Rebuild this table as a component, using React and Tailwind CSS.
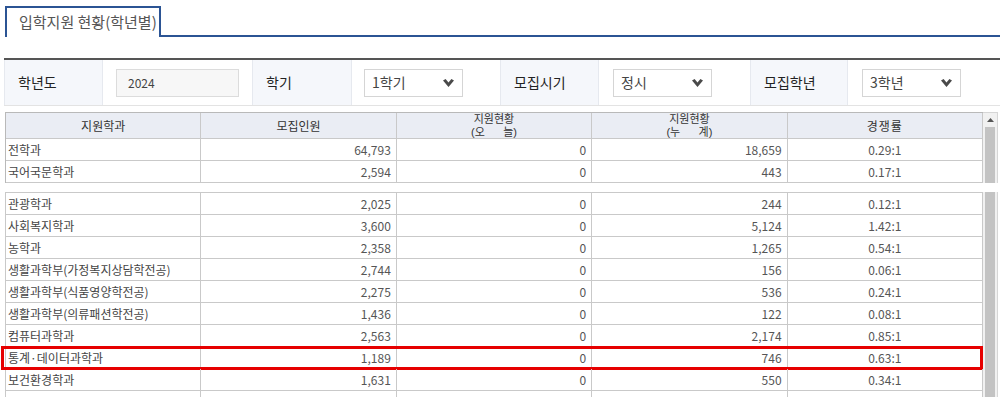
import React from 'react';

const topRows = [
  ['전학과', '64,793', '0', '18,659', '0.29:1'],
  ['국어국문학과', '2,594', '0', '443', '0.17:1'],
];

const bottomRows = [
  ['관광학과', '2,025', '0', '244', '0.12:1'],
  ['사회복지학과', '3,600', '0', '5,124', '1.42:1'],
  ['농학과', '2,358', '0', '1,265', '0.54:1'],
  ['생활과학부(가정복지상담학전공)', '2,744', '0', '156', '0.06:1'],
  ['생활과학부(식품영양학전공)', '2,275', '0', '536', '0.24:1'],
  ['생활과학부(의류패션학전공)', '1,436', '0', '122', '0.08:1'],
  ['컴퓨터과학과', '2,563', '0', '2,174', '0.85:1'],
  ['통계·데이터과학과', '1,189', '0', '746', '0.63:1', true],
  ['보건환경학과', '1,631', '0', '550', '0.34:1'],
  ['', '', '', '', ''],
];

function Chevron() {
  return (
    <svg width="11" height="8" viewBox="0 0 11 8" className="shrink-0">
      <path d="M0 1.6 L2.6 0 L5.5 3.6 L8.4 0 L11 1.6 L5.5 8 Z" fill="#4a4a4a" />
    </svg>
  );
}

function Select({ value, offset }) {
  return (
    <div className={`h-full flex items-center ${offset}`}>
      <div className="w-[99px] h-[28px] border border-[#d5d5d5] bg-white flex items-center justify-between pl-[7px] pr-[8px] text-[14px] text-[#444]">
        <span>{value}</span>
        <Chevron />
      </div>
    </div>
  );
}

function Label({ children }) {
  return (
    <div className="h-full bg-[#f5f7fb] border-x border-[#e6e9ef] flex items-center pl-[13px] text-[14px] text-[#222]">
      {children}
    </div>
  );
}

function Row({ r }) {
  return (
    <div className="relative grid grid-cols-5 h-[22px] border-b border-[#c9c9c9] text-[12px] text-[#555]">
      <div className="border-r border-[#c9c9c9] flex items-center pl-[2px] text-[#444] whitespace-nowrap overflow-hidden">{r[0]}</div>
      <div className="border-r border-[#c9c9c9] flex items-center justify-end pr-[5px]">{r[1]}</div>
      <div className="border-r border-[#c9c9c9] flex items-center justify-end pr-[5px]">{r[2]}</div>
      <div className="border-r border-[#c9c9c9] flex items-center justify-end pr-[5px]">{r[3]}</div>
      <div className="border-r border-[#c9c9c9] flex items-center justify-center">{r[4]}</div>
      {r[5] && (
        <div className="pointer-events-none absolute -left-[5px] right-0 -top-[1px] h-[24px] border-[3px] border-[#e60000]" />
      )}
    </div>
  );
}

function TwoLine({ a, b }) {
  return (
    <div className="border-r border-[#c9c9c9] flex flex-col items-center justify-center whitespace-pre font-['Liberation_Sans','Noto_Sans_CJK_KR',sans-serif] text-[11px] leading-[13px]">
      <span>{a}</span>
      <span>{b}</span>
    </div>
  );
}

export default function App() {
  return (
    <div className="w-[1004px] h-[397px] overflow-hidden bg-white font-['Noto_Sans_CJK_KR','Noto_Sans',sans-serif]">
      {/* Tab */}
      <div className="pt-[6px] flex items-end pr-[4px]">
        <div className="ml-[5px] w-[156px] h-[31px] border-2 border-b-0 border-[#2b5494] flex items-center pl-[12px] text-[15px] text-[#555]">
          입학지원 현황(학년별)
        </div>
        <div className="flex-1 border-b-2 border-[#2b5494]" />
      </div>

      {/* Filter bar */}
      <div className="mt-[21px] mx-[4px] border-t-2 border-[#555] border-b border-b-[#e3e3e3] h-[48px] grid grid-cols-[99px_149px_100px_148px_99px_151px_98px_150px]">
        <Label>학년도</Label>
        <div className="h-full flex items-center pl-[13px]">
          <div className="w-[123px] h-[28px] border border-[#dcdcdc] bg-[#f7f7f7] flex items-center pl-[11px] text-[12px] text-[#444]">
            2024
          </div>
        </div>
        <Label>학기</Label>
        <Select value="1학기" offset="pl-[12px]" />
        <Label>모집시기</Label>
        <Select value="정시" offset="pl-[14px]" />
        <Label>모집학년</Label>
        <Select value="3학년" offset="pl-[14px]" />
      </div>

      {/* Table, upper part */}
      <div className="mt-[6px] ml-[5px] w-[993px] flex">
        <div className="w-[978px] border-l border-t border-[#b9b9b9]">
          <div className="grid grid-cols-5 h-[26px] bg-[#eaedf4] border-b border-[#c9c9c9] text-[12px] text-[#333]">
            <div className="border-r border-[#c9c9c9] flex items-center justify-center">지원학과</div>
            <div className="border-r border-[#c9c9c9] flex items-center justify-center">모집인원</div>
            <TwoLine a="지원현황" b="(오      늘)" />
            <TwoLine a="지원현황" b="(누      계)" />
            <div className="border-r border-[#c9c9c9] flex items-center justify-center tracking-[1px]">경쟁률</div>
          </div>
          {topRows.map((r, i) => (
            <Row key={i} r={r} />
          ))}
        </div>
        <div className="w-[15px] flex flex-col border-t border-r border-[#d6d6d6] bg-[#f1f1f1]">
          <div className="h-[14px] flex items-center justify-center">
            <svg width="7" height="4" viewBox="0 0 7 4">
              <path d="M0 4 L3.5 0 L7 4 Z" fill="#555" />
            </svg>
          </div>
          <div className="flex-1 mx-[2px] bg-[#c3c3c3]" />
        </div>
      </div>

      {/* gap */}
      <div className="h-[9px]" />

      {/* Table, lower part */}
      <div className="ml-[5px] w-[993px] flex">
        <div className="w-[978px] border-l border-t border-[#c9c9c9]">
          {bottomRows.map((r, i) => (
            <Row key={i} r={r} />
          ))}
        </div>
        <div className="w-[15px] flex flex-col border-r border-[#d6d6d6] bg-[#f1f1f1]">
          <div className="flex-1 mx-[2px] bg-[#c3c3c3]" />
        </div>
      </div>
    </div>
  );
}
